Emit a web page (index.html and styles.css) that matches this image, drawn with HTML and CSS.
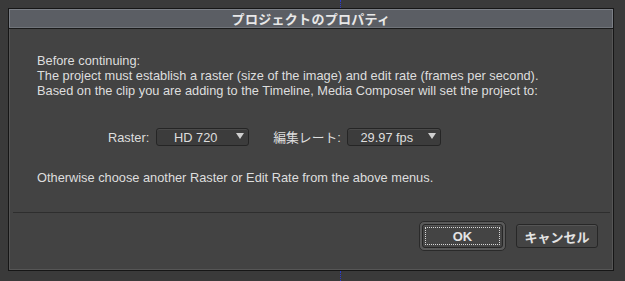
FILE: index.html
```html
<!DOCTYPE html>
<html lang="ja">
<head>
<meta charset="utf-8">
<title>プロジェクトのプロパティ</title>
<link rel="stylesheet" href="styles.css">
</head>
<body>
<div class="marker marker-top"></div>
<div class="dialog">
  <div class="titlebar">プロジェクトのプロパティ</div>
  <div class="body">
    <div class="content">
      <p class="intro">Before continuing:<br>The project must establish a raster (size of the image) and edit rate (frames per second).<br>Based on the clip you are adding to the Timeline, Media Composer will set the project to:</p>
      <div class="selectors">
        <span class="label label-raster">Raster:</span>
        <div class="dropdown dd-raster"><span class="dd-text">HD 720</span><span class="arrow"></span></div>
        <span class="label label-rate">編集レート:</span>
        <div class="dropdown dd-rate"><span class="dd-text">29.97 fps</span><span class="arrow"></span></div>
      </div>
      <p class="other">Otherwise choose another Raster or Edit Rate from the above menus.</p>
    </div>
    <div class="separator"></div>
    <div class="buttons">
      <div class="ok-ring"><div class="btn btn-ok"><span class="focus">OK</span></div></div>
      <div class="btn btn-cancel">キャンセル</div>
    </div>
  </div>
</div>
<div class="marker marker-bottom"></div>
</body>
</html>
```

FILE: styles.css
```css
html, body {
  margin: 0;
  padding: 0;
}
body {
  background: #3a3a3a;
  width: 625px;
  height: 281px;
  overflow: hidden;
  position: relative;
  font-family: "Liberation Sans", "Noto Sans CJK JP", sans-serif;
  color: #dedede;
}
.marker {
  position: absolute;
  left: 340px;
  width: 0;
  border-left: 1px dotted #2a3bd0;
}
.marker-top { top: 0; height: 8px; }
.marker-bottom { top: 271px; height: 10px; }

.dialog {
  margin: 8px 0 0 8px;
  width: 604px;
  height: 261px;
  border: 1px solid #161616;
  background: #434343;
  display: flex;
  flex-direction: column;
}
.titlebar {
  height: 17px;
  border: 1px solid #7b7f86;
  border-bottom: 1px solid #70747a;
  background: #5b5e64;
  box-shadow: 0 1px 0 #1a1a1a;
  text-align: center;
  font-family: "Noto Sans CJK JP", sans-serif;
  font-weight: bold;
  font-size: 13px;
  line-height: 17px;
  color: #e8e8e8;
  letter-spacing: 0.3px;
}
.body {
  flex: 1;
  margin-top: 1px;
  border-left: 1px solid #565656;
  border-right: 1px solid #565656;
  border-bottom: 1px solid #565656;
  display: flex;
  flex-direction: column;
}
.content {
  padding: 24px 0 0 27px;
  font-size: 12.8px;
  line-height: 15px;
}
.intro {
  margin: 0;
}
.selectors {
  display: flex;
  align-items: center;
  margin-top: 30px;
  height: 18px;
}
.label {
  font-size: 12.8px;
}
.label-raster { margin-left: 71px; }
.label-rate {
  margin-left: 24px;
}
.dropdown {
  position: relative;
  box-sizing: border-box;
  height: 18px;
  border: 1px solid #252525;
  border-radius: 3px;
  background: #3c3c3c;
  box-shadow: inset 0 1px 0 #4a4a4a;
  display: flex;
  align-items: center;
  justify-content: center;
  font-size: 12.8px;
}
.dd-raster { width: 93px; margin-left: 7px; }
.dd-rate { width: 94px; margin-left: 6px; }
.dd-text { margin-right: 14px; }
.arrow {
  position: absolute;
  right: 4px;
  top: 4px;
  width: 0;
  height: 0;
  border-left: 4.5px solid transparent;
  border-right: 4.5px solid transparent;
  border-top: 6px solid #cfcfcf;
}
.other {
  margin: 24px 0 0 0;
}
.separator {
  margin: 27px 2px 0 3px;
  height: 1px;
  background: #2e2e2e;
}
.buttons {
  display: flex;
  justify-content: flex-end;
  align-items: center;
  margin-top: 8px;
  padding-right: 14px;
  gap: 10px;
}
.btn {
  box-sizing: border-box;
  height: 24px;
  border: 1px solid #272727;
  border-radius: 3px;
  background: #444;
  box-shadow: inset 0 1px 0 #555;
  display: flex;
  align-items: center;
  justify-content: center;
  font-family: "Noto Sans CJK JP", sans-serif;
  font-weight: bold;
  font-size: 13px;
  color: #e4e4e4;
}
.ok-ring {
  padding: 2px;
  border: 1px solid #2a2a2a;
  border-radius: 5px;
  background: #5a5a5a;
}
.btn-ok {
  width: 81px;
  padding: 2px;
}
.focus {
  flex: 1;
  align-self: stretch;
  display: flex;
  align-items: center;
  justify-content: center;
  border: 1px dotted #d8d8d8;
  font-family: "Liberation Sans", sans-serif;
  font-weight: bold;
}
.btn-cancel {
  width: 82px;
}
```
